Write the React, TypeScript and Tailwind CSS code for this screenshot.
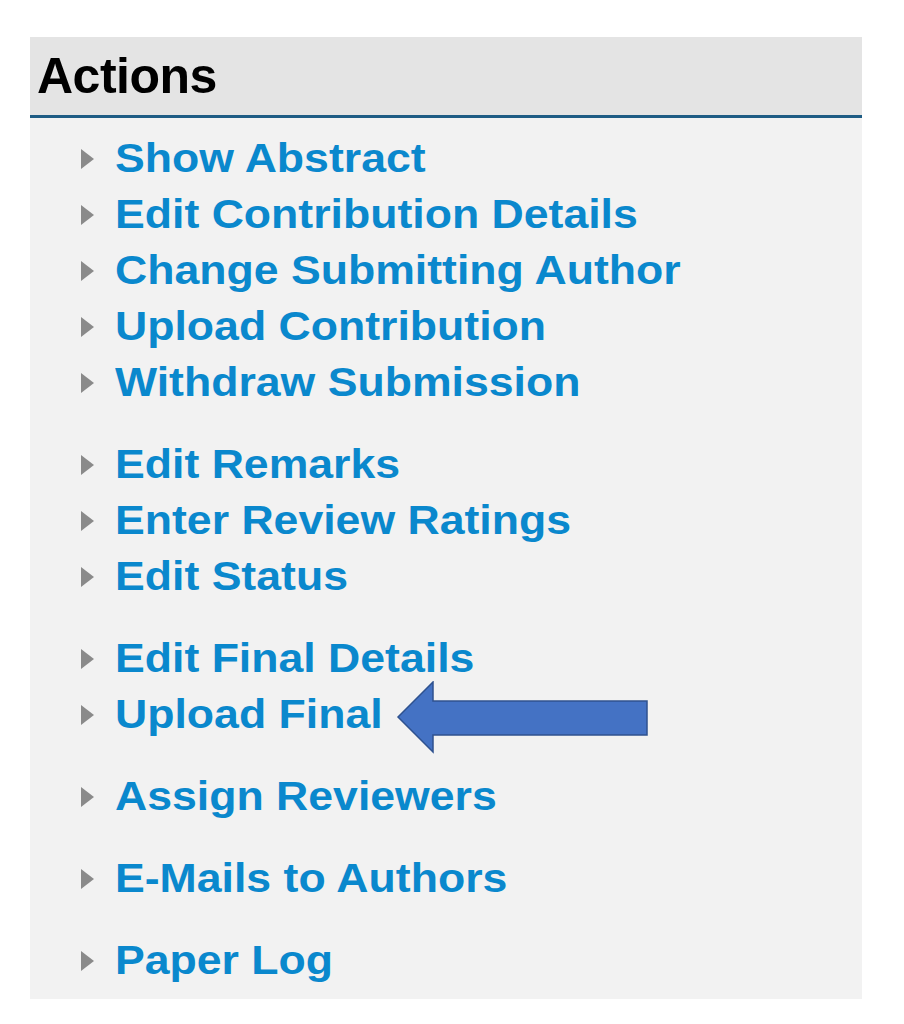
import React from "react";

const groups: string[][] = [
  ["Show Abstract", "Edit Contribution Details", "Change Submitting Author", "Upload Contribution", "Withdraw Submission"],
  ["Edit Remarks", "Enter Review Ratings", "Edit Status"],
  ["Edit Final Details", "Upload Final"],
  ["Assign Reviewers"],
  ["E-Mails to Authors"],
  ["Paper Log"],
];

function Tri() {
  return (
    <svg width="13" height="20" viewBox="0 0 13 20" className="mt-[19px] shrink-0">
      <polygon points="0,0 13,10 0,20" fill="#8a8a8a" />
    </svg>
  );
}

export default function App() {
  return (
    <div className="min-h-[1024px] bg-white pt-[37px] pl-[30px]" style={{ fontFamily: '"Liberation Sans", Arial, Helvetica, sans-serif' }}>
      <div className="relative w-[832px] bg-[#f2f2f2]">
        <div className="h-[81px] bg-[#e4e4e4] border-b-[3px] border-[#1e5c84] pt-[14px] pl-[7px]">
          <div className="text-[50px] leading-[50px] font-bold tracking-[-0.5px] text-black">Actions</div>
        </div>
        <div className="pt-[12px] pb-[11px] pl-[51px]">
          {groups.map((g, gi) => (
            <div key={gi} className={gi === 0 ? "" : "mt-[26px]"}>
              {g.map((item) => (
                <div key={item} className="flex items-start gap-[21px] h-[56px]">
                  <Tri />
                  <span className="inline-block origin-left scale-x-[1.115] text-[40px] leading-[56px] font-bold text-[#0a88cd] whitespace-nowrap">
                    {item}
                  </span>
                </div>
              ))}
            </div>
          ))}
        </div>
        <svg
          className="absolute left-[366px] top-[644px]"
          width="254"
          height="74"
          viewBox="0 0 254 74"
        >
          <polygon
            points="2,36 37,1 37,20 251,20 251,54 37,54 37,71"
            fill="#4472c4"
            stroke="#2f528f"
            strokeWidth="1.5"
            strokeLinejoin="miter"
          />
        </svg>
      </div>
    </div>
  );
}
